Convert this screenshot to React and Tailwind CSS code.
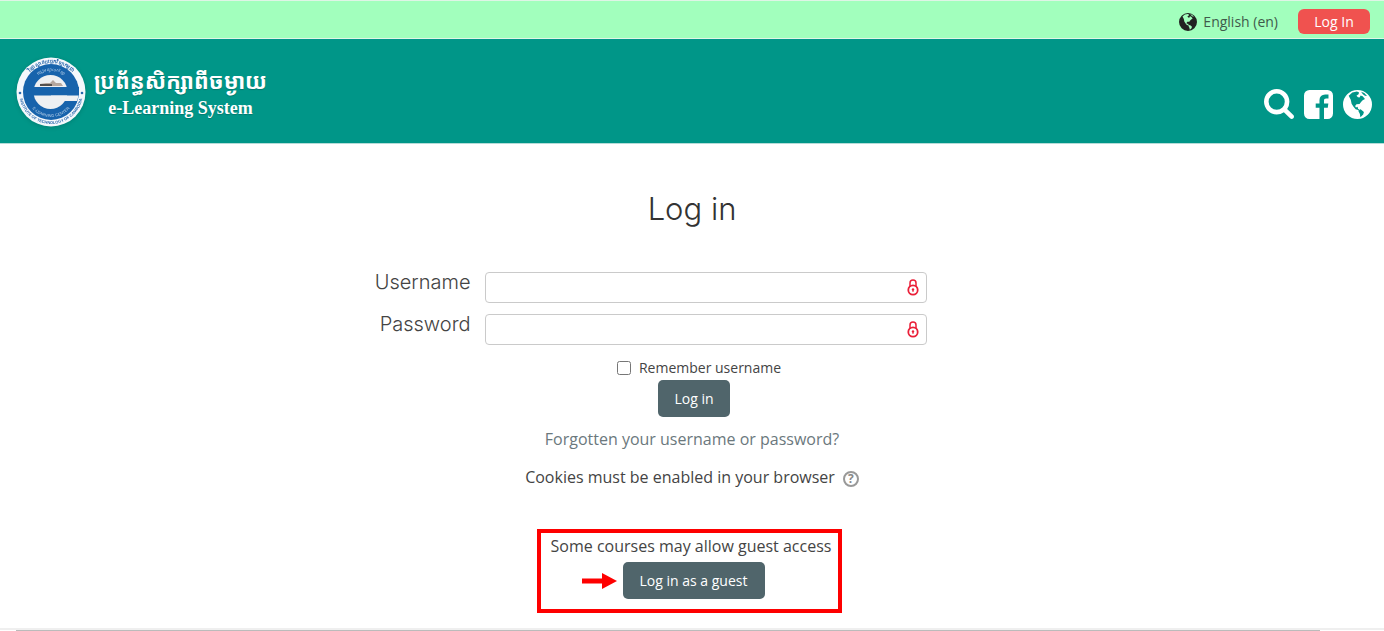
import React, { useState } from 'react';

const SearchIcon = ({ className }) => (
  <svg viewBox="0 0 1664 1664" className={className} fill="currentColor" aria-hidden="true">
    <path d="M1152 704q0-185-131.500-316.500t-316.500-131.500-316.500 131.500-131.500 316.500 131.500 316.500 316.500 131.500 316.500-131.500 131.500-316.500zm512 832q0 52-38 90t-90 38q-54 0-90-38l-343-342q-179 124-399 124-143 0-273.500-55.500t-225-150-150-225-55.500-273.500 55.500-273.500 150-225 225-150 273.500-55.500 273.500 55.500 225 150 150 225 55.500 273.500q0 220-124 399l343 343q37 37 37 90z" />
  </svg>
);

const FacebookIcon = ({ className }) => (
  <svg viewBox="0 128 1536 1536" className={className} fill="currentColor" aria-hidden="true">
    <path d="M1248 128q119 0 203.500 84.500t84.500 203.500v960q0 119-84.500 203.500t-203.500 84.500h-188v-595h199l30-232h-229v-148q0-56 23.500-84t91.500-28l122-1v-207q-63-9-178-9-136 0-217.500 80t-81.500 226v171h-200v232h200v595h-532q-119 0-203.500-84.500t-84.500-203.500v-960q0-119 84.500-203.500t203.500-84.500h960z" />
  </svg>
);

const GlobeIcon = ({ className }) => (
  <svg viewBox="0 0 28 28" className={className} fill="currentColor" aria-hidden="true">
    <path
      fillRule="evenodd"
      d="M14 0a14 14 0 1 0 0 28a14 14 0 1 0 0-28zM5.500 5.500L9 2.500l4.500-1 2 1-.5 1.700-2 1.300 1.500 1.500 1.500.2 1-2 2 .8 2.200 2.700-2.200 1.300-1.600 1.500-1.400 2-3 .2-1.300 1.800.8 1.500 1.600-.8.4 1.800 1.500 1-.5.5-3.300-1-2.200-2.500-1.700-2.700-.8-3.800zM14.500 19.500l2.500-.8 3.200 2.600-.7 2.400-2.700 2.500-.5-3zM17.500 1.700l3 1.300 2.700 2.800-2-.3-2-1.500z"
    />
  </svg>
);

const LockIcon = ({ className }) => (
  <svg viewBox="0 0 12 17" className={className} fill="none" stroke="currentColor" aria-hidden="true">
    <path d="M3 8V4a3 3 0 0 1 6 0v3" strokeWidth="1.500" />
    <circle cx="6" cy="11" r="4.700" strokeWidth="1.800" />
    <circle cx="6" cy="10.500" r="1.200" fill="currentColor" stroke="none" />
    <path d="M6 10.500v2.500" strokeWidth="1" />
  </svg>
);

const Logo = ({ className }) => (
  <svg viewBox="0 0 70 70" className={className} role="img" aria-label="e-Learning Center">
    <defs>
      <path id="ringTop" d="M6 35a29 29 0 0 1 58 0" />
      <path id="ringBottom" d="M3 35a32 32 0 0 0 64 0" />
      <path id="innerBottom" d="M10 35a25 25 0 0 0 50 0" />
      <path id="innerTop" d="M14 35a21 21 0 0 1 42 0" />
    </defs>
    <circle cx="35" cy="35" r="34.500" fill="#f4f8fc" />
    <circle cx="35" cy="35" r="28" fill="#1763ac" />
    <circle cx="34.500" cy="35" r="17" fill="#eef0f2" />
    <path d="M17 30h46v8.500H17z" fill="#1763ac" />
    <path d="M35 38.500h27.500a28 28 0 0 1-1.500 5.500H35z" fill="#eef0f2" />
    <path d="M24 27l6-1 4 0 3-3 3 3 5 0 2 3H24z" fill="#b4a79f" />
    <path d="M24 28h12" stroke="#333" strokeWidth="1.500" />
    <g fill="#2a69ad" fontFamily="Liberation Sans" fontSize="4" fontWeight="bold" textAnchor="middle">
      <text fontSize="5"><textPath href="#ringTop" startOffset="50%">វិទ្យាស្ថានបច្ចេកវិទ្យាកម្ពុជា</textPath></text>
      <text><textPath href="#ringBottom" startOffset="50%">INSTITUTE OF TECHNOLOGY OF CAMBODIA</textPath></text>
    </g>
    <g fill="#b9d2ea" fontFamily="Liberation Sans" fontSize="4" textAnchor="middle">
      <text><textPath href="#innerBottom" startOffset="50%">E-LEARNING CENTER</textPath></text>
      <text><textPath href="#innerTop" startOffset="50%">មជ្ឈមណ្ឌលសិក្សា</textPath></text>
    </g>
    <g fill="#2a69ad">
      <circle cx="4" cy="36" r="1.300" />
      <circle cx="66" cy="36" r="1.300" />
    </g>
  </svg>
);

const Field = ({ id, label, type, value, onChange }) => (
  <div className="grid grid-cols-[34%_32%] gap-x-3.5">
    <label htmlFor={id} className="text-right font-['Inter',sans-serif] text-xl font-light leading-5 text-[#444]">
      {label}
    </label>
    <div className="relative">
      <input
        id={id}
        type={type}
        value={value}
        onChange={onChange}
        className="block h-[31px] w-full rounded border border-[#cacaca] bg-white px-3 pr-8 text-sm"
      />
      <LockIcon className="absolute right-2 top-[7px] h-[17px] w-3 text-[#ea1f38]" />
    </div>
  </div>
);

const App = () => {
  const [username, setUsername] = useState('');
  const [password, setPassword] = useState('');
  const [remember, setRemember] = useState(false);

  const handleSubmit = (event) => {
    event.preventDefault();
  };

  return (
    <div className="bg-white font-['Open_Sans',sans-serif] text-[#444]">
      {/* Top bar */}
      <div className="flex h-[39px] items-center justify-end gap-5 border-y border-[#dff5e6] bg-[#a2ffbd] pr-3.5 pt-1">
        <a href="#lang" className="flex items-center gap-1.5 text-sm text-[#3f5a4b]">
          <GlobeIcon className="size-[18px] text-[#222]" />
          English (en)
        </a>
        <button type="button" className="h-[25px] w-18 rounded-md bg-[#f0524f] text-sm leading-6 text-white">
          Log In
        </button>
      </div>

      {/* Header */}
      <header className="flex h-[105px] items-center justify-between border-b border-[#b5dcd8] bg-[#009688] pl-4 pr-3">
        <a href="#home" className="flex items-center gap-2 pt-px text-white">
          <Logo className="size-[70px] drop-shadow-sm" />
          <span className="flex flex-col items-center text-shadow-xs">
            <span className="font-['Noto_Sans_Khmer','DejaVu_Sans',sans-serif] text-[22px] font-bold leading-8">
              ប្រព័ន្ធសិក្សាពីចម្ងាយ
            </span>
            <span className="font-['Liberation_Serif',serif] text-lg font-bold leading-6">e-Learning System</span>
          </span>
        </a>
        <nav className="flex items-center gap-2.5 pt-[26px] text-white">
          <a href="#search" aria-label="Search"><SearchIcon className="size-[30px]" /></a>
          <a href="#facebook" aria-label="Facebook"><FacebookIcon className="size-[29px]" /></a>
          <a href="#website" aria-label="Website"><GlobeIcon className="size-[29px]" /></a>
        </nav>
      </header>

      <main>
        <h1 className="pt-11 text-center font-['Inter',sans-serif] text-[31px] font-light leading-[42px] text-[#333]">
          Log in
        </h1>

        <form onSubmit={handleSubmit} className="pt-[42px]">
          <div className="flex flex-col gap-[11px]">
            <Field id="username" label="Username" type="text" value={username} onChange={(e) => setUsername(e.target.value)} />
            <Field id="password" label="Password" type="password" value={password} onChange={(e) => setPassword(e.target.value)} />
          </div>

          <div className="flex flex-col items-center pt-[11px]">
            <label className="flex items-center gap-2 pl-3.5 text-sm leading-6">
              <input type="checkbox" checked={remember} onChange={(e) => setRemember(e.target.checked)} className="size-3.5" />
              Remember username
            </label>
            <button type="submit" className="ml-1 h-[37px] rounded-[5px] bg-[#50656b] px-4 text-sm text-white">
              Log in
            </button>
          </div>
        </form>

        <div className="flex flex-col items-center text-base">
          <a href="#forgot" className="pt-2.5 leading-6 text-[#6b787d]">Forgotten your username or password?</a>
          <div className="flex items-center gap-2 pt-3.5 leading-6">
            Cookies must be enabled in your browser
            <button type="button" aria-label="Help with cookies" className="mt-1 size-4 rounded-full border-2 border-[#999] text-xs font-bold leading-3 text-[#888]">
              ?
            </button>
          </div>

          {/* Guest access */}
          <section className="mr-1.5 mt-10 flex w-[305px] flex-col items-center border-4 border-[#fe0000] pb-2.5">
            <p className="pl-1 pt-px leading-6">Some courses may allow guest access</p>
            <div className="flex items-center gap-1.5 pr-8 pt-1">
              <svg viewBox="0 0 35 16" className="h-4 w-[35px] text-[#fe0000]" fill="currentColor" aria-hidden="true">
                <path d="M0 5.500h20V0l15 8-15 8v-5.500H0z" />
              </svg>
              <button type="button" className="h-[37px] w-[142px] rounded-[5px] bg-[#50656b] text-sm text-white">
                Log in as a guest
              </button>
            </div>
          </section>
        </div>
      </main>

      <footer className="mt-[15px] border-t-2 border-[#efefef]">
        <div className="ml-4 mr-16 border-t border-[#bbb]" />
      </footer>
    </div>
  );
};

export default App;
